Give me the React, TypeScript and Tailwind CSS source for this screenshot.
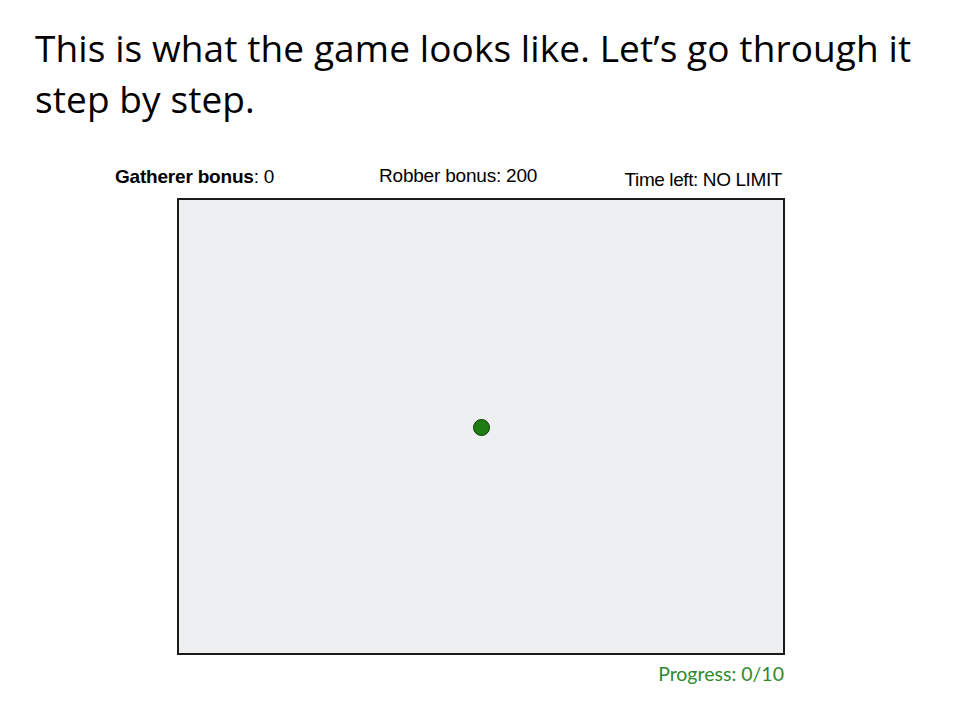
export default function App() {
  return (
    <div className="w-[960px] h-[720px] bg-white relative overflow-hidden">
      <div className="pl-[35px] pt-[22px] h-[134px]">
        <p className="text-[37px] leading-[51px] tracking-[0.1px] text-black" style={{ fontFamily: '"Open Sans", "Lato", sans-serif' }}>
          This is what the game looks like. Let’s go through it
          <br />
          step by step.
        </p>
      </div>
      <div className="mt-[34px] ml-[115px] w-[670px]" style={{ fontFamily: '"Liberation Sans", Arial, sans-serif' }}>
        <div className="flex items-end h-[30px] text-[19px] leading-[22px] text-black tracking-[-0.2px]">
          <div className="w-[264px] pb-[10px]"><span className="font-bold">Gatherer bonus</span>: 0</div>
          <div className="pb-[11px]">Robber bonus: 200</div>
          <div className="ml-auto mr-[3px] pb-[7px] tracking-[-0.4px]">Time left: NO LIMIT</div>
        </div>
        <div className="ml-[62px] w-[608px] h-[457px] border-2 border-[#1a1a1a] bg-[#eeeff1] flex items-center justify-center">
          <div className="w-[17px] h-[17px] rounded-full bg-[#1e7d12] border border-[#0d3a08] mt-[2px]" />
        </div>
        <div className="flex justify-end mt-[4px] mr-[1px]">
          <span className="text-[19.5px] text-[#2f8a2f]" style={{ fontFamily: '"Lato", "Open Sans", sans-serif' }}>Progress: 0/10</span>
        </div>
      </div>
    </div>
  );
}
